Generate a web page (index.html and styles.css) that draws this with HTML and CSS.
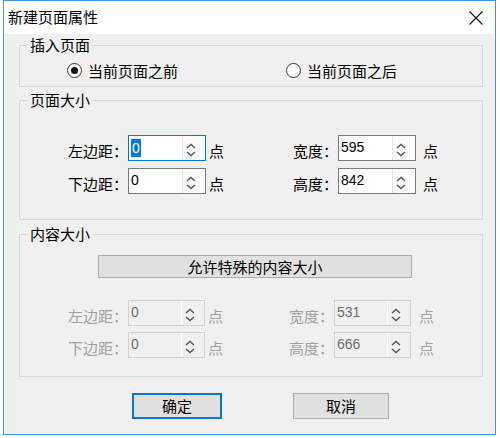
FILE: index.html
```html
<!DOCTYPE html>
<html lang="zh-CN">
<head>
<meta charset="utf-8">
<title>新建页面属性</title>
<link rel="stylesheet" href="styles.css">
</head>
<body>
<div class="window">
  <div class="titlebar">
    <span class="title">新建页面属性</span>
    <svg class="close" width="14" height="14" viewBox="0 0 14 14"><path d="M0.5 0.5L13.5 13.5M13.5 0.5L0.5 13.5" stroke="#111" stroke-width="1.1" fill="none"/></svg>
  </div>
  <div class="client">
    <fieldset class="group g-insert">
      <legend>插入页面</legend>
      <div class="radios">
        <label class="radio r1"><span class="dot checked"></span>当前页面之前</label>
        <label class="radio r2"><span class="dot"></span>当前页面之后</label>
      </div>
    </fieldset>

    <fieldset class="group g-page">
      <legend>页面大小</legend>
      <div class="fields">
        <div class="row">
          <span class="lbl l1">左边距：</span>
          <div class="spin focus"><span class="val"><span class="sel">0</span></span><span class="arrows"><svg width="22" height="24" viewBox="0 0 22 24"><path d="M4 12L8 8.5L12 12M4 16L8 19.5L12 16" stroke="#555" stroke-width="1.4" fill="none"/></svg></span></div>
          <span class="unit u1">点</span>
          <span class="lbl l2">宽度：</span>
          <div class="spin"><span class="val">595</span><span class="arrows"><svg width="22" height="24" viewBox="0 0 22 24"><path d="M4 12L8 8.5L12 12M4 16L8 19.5L12 16" stroke="#555" stroke-width="1.4" fill="none"/></svg></span></div>
          <span class="unit u2">点</span>
        </div>
        <div class="row">
          <span class="lbl l1">下边距：</span>
          <div class="spin"><span class="val">0</span><span class="arrows"><svg width="22" height="24" viewBox="0 0 22 24"><path d="M4 12L8 8.5L12 12M4 16L8 19.5L12 16" stroke="#555" stroke-width="1.4" fill="none"/></svg></span></div>
          <span class="unit u1">点</span>
          <span class="lbl l2">高度：</span>
          <div class="spin"><span class="val">842</span><span class="arrows"><svg width="22" height="24" viewBox="0 0 22 24"><path d="M4 12L8 8.5L12 12M4 16L8 19.5L12 16" stroke="#555" stroke-width="1.4" fill="none"/></svg></span></div>
          <span class="unit u2">点</span>
        </div>
      </div>
    </fieldset>

    <fieldset class="group g-content">
      <legend>内容大小</legend>
      <div class="content-body">
        <div class="wide-btn">允许特殊的内容大小</div>
        <div class="fields disabled">
          <div class="row">
            <span class="lbl l1">左边距：</span>
            <div class="spin"><span class="val">0</span><span class="arrows"><svg width="22" height="24" viewBox="0 0 22 24"><path d="M4 12L8 8.5L12 12M4 16L8 19.5L12 16" stroke="#555" stroke-width="1.4" fill="none"/></svg></span></div>
            <span class="unit u1">点</span>
            <span class="lbl l2">宽度：</span>
            <div class="spin"><span class="val">531</span><span class="arrows"><svg width="22" height="24" viewBox="0 0 22 24"><path d="M4 12L8 8.5L12 12M4 16L8 19.5L12 16" stroke="#555" stroke-width="1.4" fill="none"/></svg></span></div>
            <span class="unit u2">点</span>
          </div>
          <div class="row">
            <span class="lbl l1">下边距：</span>
            <div class="spin"><span class="val">0</span><span class="arrows"><svg width="22" height="24" viewBox="0 0 22 24"><path d="M4 12L8 8.5L12 12M4 16L8 19.5L12 16" stroke="#555" stroke-width="1.4" fill="none"/></svg></span></div>
            <span class="unit u1">点</span>
            <span class="lbl l2">高度：</span>
            <div class="spin"><span class="val">666</span><span class="arrows"><svg width="22" height="24" viewBox="0 0 22 24"><path d="M4 12L8 8.5L12 12M4 16L8 19.5L12 16" stroke="#555" stroke-width="1.4" fill="none"/></svg></span></div>
            <span class="unit u2">点</span>
          </div>
        </div>
      </div>
    </fieldset>

    <div class="buttons">
      <div class="btn ok">确定</div>
      <div class="btn cancel">取消</div>
    </div>
  </div>
</div>
</body>
</html>
```

FILE: styles.css
```css
* { box-sizing: border-box; }

html, body {
  margin: 0;
  padding: 0;
}

body {
  width: 500px;
  height: 438px;
  background: #ffffff;
  font-family: "Noto Sans CJK SC", "Noto Sans", sans-serif;
  font-size: 15px;
  color: #000;
  overflow: hidden;
}

.window {
  margin-left: 3px;
  width: 493px;
  height: 435px;
  border: 1px solid #3d94e2;
  background: #f0f0f0;
  display: flex;
  flex-direction: column;
}

.titlebar {
  height: 33px;
  background: #ffffff;
  display: flex;
  align-items: center;
  padding-left: 4px;
  padding-right: 12px;
}

.title {
  flex: 1;
  line-height: 20px;
  margin-top: -2px;
}

.close {
  display: block;
}

.client {
  flex: 1;
  padding: 1px 0 0 15px;
}

.group {
  margin: 0;
  padding: 0;
  width: 464px;
  border: 1px solid #d9d9d9;
  min-width: 0;
}

.group legend {
  margin-left: 8px;
  padding: 0 2px;
  line-height: 20px;
  font-size: 15px;
}

.g-page { margin-top: 3px; }
.g-content { margin-top: 4px; }

/* radios */
.radios {
  height: 31px;
  display: flex;
  align-items: center;
  padding-left: 47px;
}

.radio {
  display: flex;
  align-items: center;
  line-height: 20px;
}

.r1 { width: 219px; }

.dot {
  width: 15px;
  height: 15px;
  border: 1px solid #333;
  border-radius: 50%;
  background: #fff;
  margin-right: 6px;
  display: flex;
  align-items: center;
  justify-content: center;
}

.dot.checked::after {
  content: "";
  width: 7px;
  height: 7px;
  border-radius: 50%;
  background: #111;
}

/* fields */
.fields {
  display: flex;
  flex-direction: column;
  gap: 7px;
}

.g-page .fields {
  padding: 25px 0 25px;
}

.row {
  display: flex;
  align-items: flex-start;
  height: 26px;
}

.lbl, .unit {
  line-height: 20px;
  padding-top: 6px;
  white-space: nowrap;
}

.lbl { text-align: right; }
.l1 { width: 108px; }
.l2 { width: 114px; }
.u1 { margin-left: 3px; width: 15px; }
.u2 { margin-left: 7px; width: 15px; }

.spin {
  width: 78px;
  height: 26px;
  border: 1px solid #7a7a7a;
  background: #fff;
  display: flex;
}

.spin.focus { border-color: #0078d7; }

.val {
  flex: 1;
  font-family: "Liberation Sans", Arial, sans-serif;
  font-size: 14px;
  line-height: 20px;
  padding: 1px 0 0 2px;
  color: #000;
}

.sel {
  display: inline-block;
  background: #0078d7;
  color: #fff;
  line-height: 18px;
  padding: 0 1px;
  margin-top: 2px;
}

.arrows {
  width: 23px;
  border-left: 1px solid #e6e6e6;
  background: #fbfbfb;
  display: block;
}

.arrows svg { display: block; }

/* content group */
.content-body {
  padding: 11px 0 18px 78px;
}

.wide-btn {
  width: 314px;
  height: 23px;
  border: 1px solid #adadad;
  background: #e1e1e1;
  text-align: center;
  line-height: 21px;
}

.content-body .fields {
  margin-top: 22px;
  margin-left: -78px;
  gap: 6px;
}

.disabled .lbl, .disabled .unit { color: #a0a0a0; }
.disabled .l2 { width: 111px; }
.disabled .u2 { margin-left: 8px; }
.disabled .spin {
  width: 77px;
  border-color: #d0d0d0;
  background: #f0f0f0;
}
.disabled .val { color: #6d6d6d; }
.disabled .arrows {
  background: #f0f0f0;
  border-left-color: #ffffff;
}

/* buttons */
.buttons {
  display: flex;
  margin-top: 16px;
  padding-left: 113px;
}

.btn {
  height: 26px;
  background: #e1e1e1;
  border: 1px solid #adadad;
  text-align: center;
  line-height: 24px;
}

.btn.ok {
  width: 90px;
  border: 2px solid #0078d7;
  line-height: 22px;
}

.btn.cancel {
  width: 96px;
  margin-left: 71px;
}
```
